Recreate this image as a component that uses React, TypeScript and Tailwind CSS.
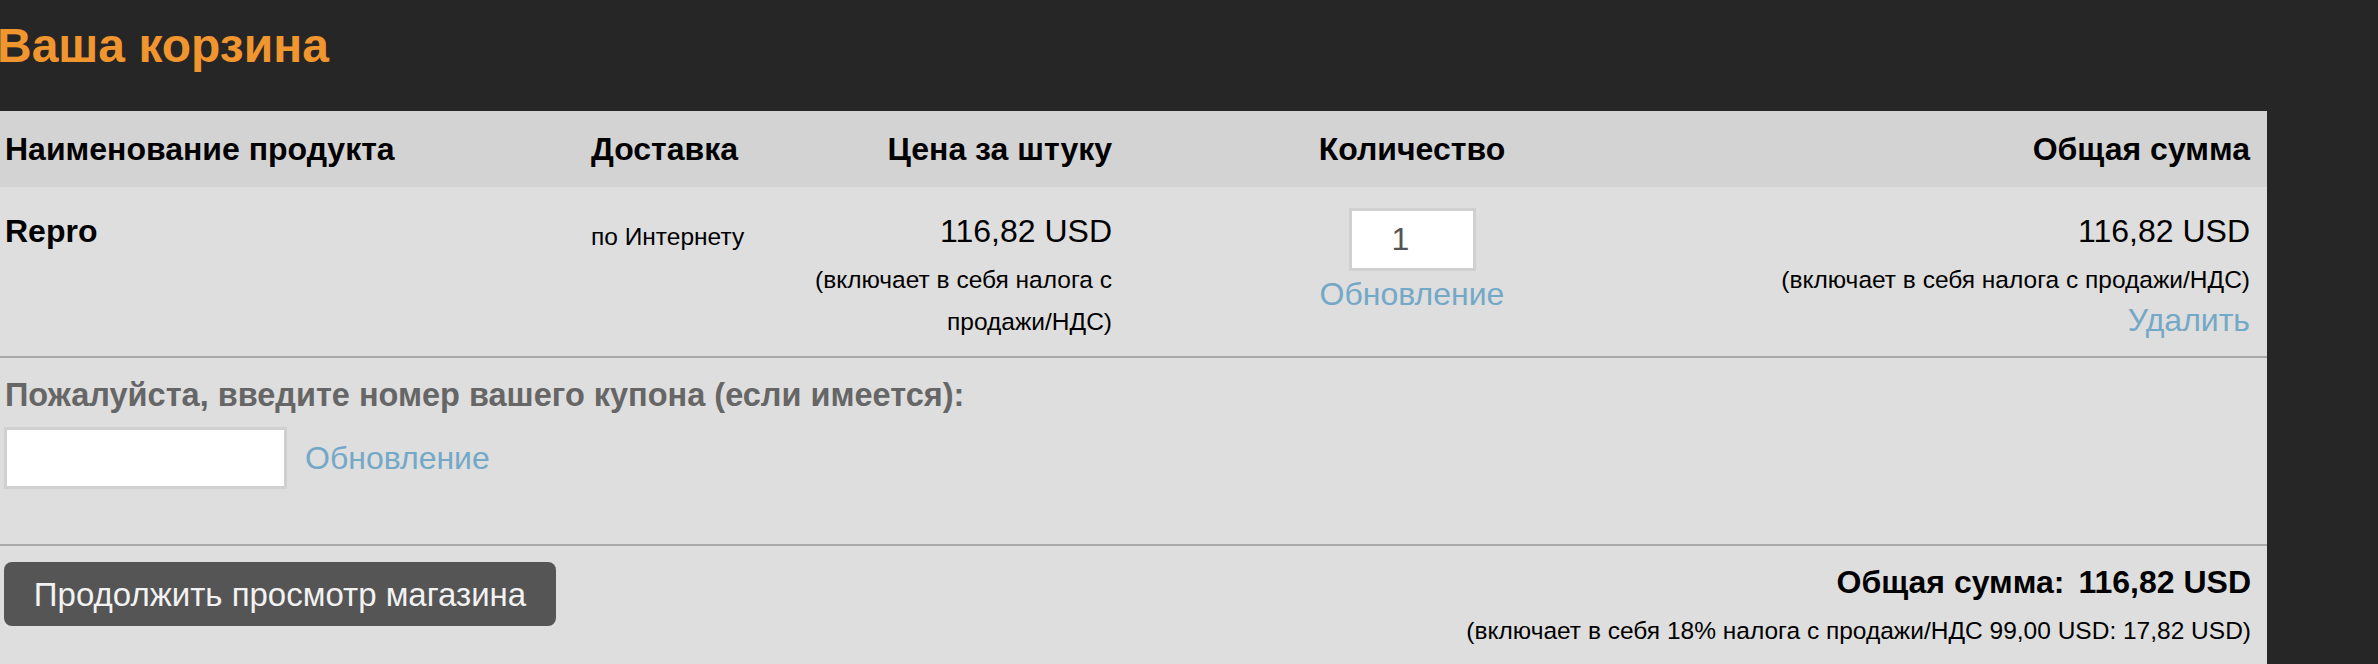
import React from "react";

const font = { fontFamily: '"Liberation Sans", Arial, sans-serif' };

export default function App() {
  return (
    <div className="min-h-screen w-full bg-[#262626]" style={font}>
      <div className="w-[2267px]">
        <div className="h-[111px] pt-[22px]">
          <h1 className="-ml-[3px] text-[48px] font-bold leading-none text-[#f1952f]">
            Ваша корзина
          </h1>
        </div>
        <div className="bg-[#dedede]">
          {/* header row */}
          <div className="grid h-[76px] grid-cols-[586px_160px_361px_600px_1fr] items-center bg-[#d3d3d3] pl-[5px] pr-[17px] text-[32px] font-bold leading-none text-black">
            <div>Наименование продукта</div>
            <div>Доставка</div>
            <div className="text-right">Цена за штуку</div>
            <div className="text-center">Количество</div>
            <div className="text-right">Общая сумма</div>
          </div>
          {/* product row */}
          <div className="grid h-[169px] grid-cols-[586px_160px_361px_600px_1fr] items-start pl-[5px] pr-[17px] text-black">
            <div className="pt-[28px] text-[32px] font-bold leading-none">Repro</div>
            <div className="pt-[38px] text-[24.5px] leading-none">по Интернету</div>
            <div className="pt-[28px] text-right">
              <div className="text-[32px] leading-none">116,82 USD</div>
              <div className="mt-[12px] text-[24.5px] leading-[42px]">
                (включает в себя налога с продажи/НДС)
              </div>
            </div>
            <div className="flex flex-col items-center pt-[21px]">
              <input
                readOnly
                value="1"
                className="h-[63px] w-[127px] border-[3px] border-[#d0d0d0] bg-white pl-[40px] text-[32px] leading-none text-[#555] outline-none"
                style={font}
              />
              <a className="mt-[7px] block text-[32px] leading-none text-[#74a8c7]">Обновление</a>
            </div>
            <div className="pt-[28px] text-right">
              <div className="text-[32px] leading-none">116,82 USD</div>
              <div className="mt-[12px] text-[24.5px] leading-[42px]">
                (включает в себя налога с продажи/НДС)
              </div>
              <a className="mt-[3px] block text-[32px] leading-none text-[#74a8c7]">Удалить</a>
            </div>
          </div>
          <div className="h-[2px] bg-[#a9a9a9]" />
          {/* coupon */}
          <div className="h-[186px] pl-[5px] pt-[21px]">
            <div className="text-[32.5px] font-bold leading-none text-[#666]">
              Пожалуйста, введите номер вашего купона (если имеется):
            </div>
            <div className="mt-[15px] flex items-center gap-[18px]">
              <input
                readOnly
                className="-ml-px h-[62px] w-[283px] border-[3px] border-[#d0d0d0] bg-white outline-none"
              />
              <a className="text-[32px] leading-none text-[#74a8c7]">Обновление</a>
            </div>
          </div>
          <div className="h-[2px] bg-[#a9a9a9]" />
          {/* bottom */}
          <div className="flex h-[118px] items-start justify-between pl-[4px] pr-[16px]">
            <button
              className="mt-[16px] flex h-[64px] w-[552px] items-center justify-center rounded-[8px] bg-[#555] text-[33px] leading-none text-[#f2f2f2]"
              style={font}
            >
              Продолжить просмотр магазина
            </button>
            <div className="pt-[20px] text-right text-black">
              <div className="text-[32px] font-bold leading-none">
                Общая сумма:<span className="ml-[14px]">116,82 USD</span>
              </div>
              <div className="mt-[21px] text-[24.5px] leading-none">
                (включает в себя 18% налога с продажи/НДС 99,00 USD: 17,82 USD)
              </div>
            </div>
          </div>
        </div>
      </div>
    </div>
  );
}
